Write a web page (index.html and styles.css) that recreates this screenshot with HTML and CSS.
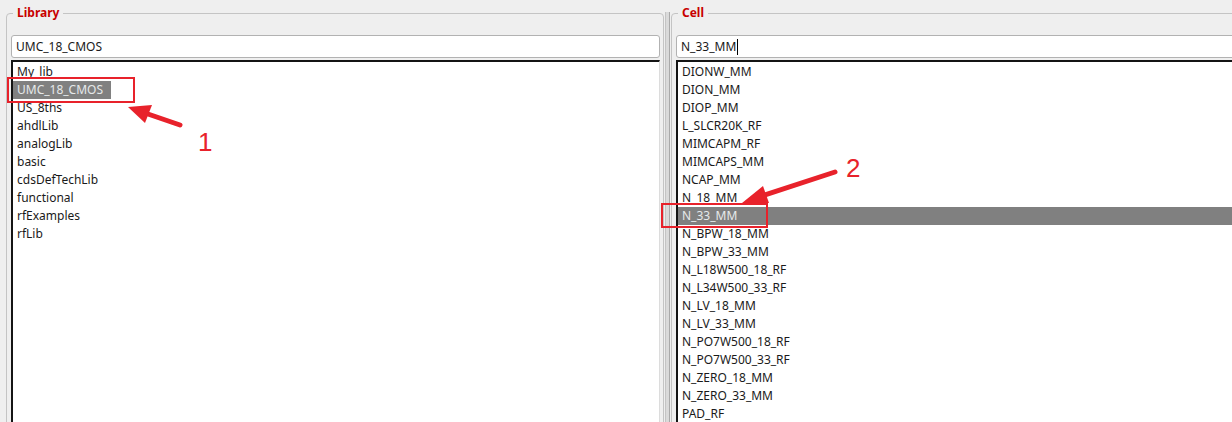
FILE: index.html
```html
<!DOCTYPE html>
<html>
<head>
<meta charset="utf-8">
<link rel="stylesheet" href="styles.css">
</head>
<body>
<div class="window">
  <fieldset class="group group-lib">
    <legend class="title">Library</legend>
    <div class="field">UMC_18_CMOS</div>
    <div class="list">
      <div class="item"><span class="label">My_lib</span></div>
      <div class="item"><span class="label sel">UMC_18_CMOS</span></div>
      <div class="item"><span class="label">US_8ths</span></div>
      <div class="item"><span class="label">ahdlLib</span></div>
      <div class="item"><span class="label">analogLib</span></div>
      <div class="item"><span class="label">basic</span></div>
      <div class="item"><span class="label">cdsDefTechLib</span></div>
      <div class="item"><span class="label">functional</span></div>
      <div class="item"><span class="label">rfExamples</span></div>
      <div class="item"><span class="label">rfLib</span></div>
    </div>
  </fieldset>
  <div class="splitter"><div class="grip"></div></div>
  <fieldset class="group group-cell">
    <legend class="title">Cell</legend>
    <div class="field">N_33_MM<span class="caret"></span></div>
    <div class="list">
      <div class="item"><span class="label">DIONW_MM</span></div>
      <div class="item"><span class="label">DION_MM</span></div>
      <div class="item"><span class="label">DIOP_MM</span></div>
      <div class="item"><span class="label">L_SLCR20K_RF</span></div>
      <div class="item"><span class="label">MIMCAPM_RF</span></div>
      <div class="item"><span class="label">MIMCAPS_MM</span></div>
      <div class="item"><span class="label">NCAP_MM</span></div>
      <div class="item"><span class="label">N_18_MM</span></div>
      <div class="item row-sel"><span class="label">N_33_MM</span></div>
      <div class="item"><span class="label">N_BPW_18_MM</span></div>
      <div class="item"><span class="label">N_BPW_33_MM</span></div>
      <div class="item"><span class="label">N_L18W500_18_RF</span></div>
      <div class="item"><span class="label">N_L34W500_33_RF</span></div>
      <div class="item"><span class="label">N_LV_18_MM</span></div>
      <div class="item"><span class="label">N_LV_33_MM</span></div>
      <div class="item"><span class="label">N_PO7W500_18_RF</span></div>
      <div class="item"><span class="label">N_PO7W500_33_RF</span></div>
      <div class="item"><span class="label">N_ZERO_18_MM</span></div>
      <div class="item"><span class="label">N_ZERO_33_MM</span></div>
      <div class="item"><span class="label">PAD_RF</span></div>
    </div>
  </fieldset>
</div>
<svg class="annot" width="1232" height="422" viewBox="0 0 1232 422">
  <rect x="8" y="78" width="126" height="24" fill="none" stroke="#e8222b" stroke-width="2"/>
  <line x1="180" y1="125" x2="145" y2="113" stroke="#e8222b" stroke-width="5" stroke-linecap="round"/>
  <polygon points="128,107 152,105 145,123" fill="#e8222b"/>
  <text class="num" x="198" y="151">1</text>
  <rect x="662" y="204" width="105" height="23" fill="none" stroke="#e8222b" stroke-width="2"/>
  <line x1="835" y1="172" x2="762" y2="196" stroke="#e8222b" stroke-width="5" stroke-linecap="round"/>
  <polygon points="742,203 763,186 769,203" fill="#e8222b"/>
  <text class="num" x="846" y="177">2</text>
</svg>
</body>
</html>
```

FILE: styles.css
```css
html, body {
  margin: 0;
  padding: 0;
}
body {
  background: #efefef;
  font-family: "Noto Sans", "DejaVu Sans", sans-serif;
  font-size: 12px;
  color: #1a1a1a;
  height: 422px;
  overflow: hidden;
  position: relative;
}
.window {
  display: flex;
  align-items: flex-start;
  width: 1500px;
  height: 422px;
  overflow: hidden;
  padding-left: 6px;
}
.group {
  margin: 5px 0 0 0;
  padding: 14px 3px 0 4px;
  border: 1px solid #c4c4c4;
  border-radius: 4px;
  min-width: 0;
  height: 600px;
  box-sizing: border-box;
  flex: none;
}
.group-lib {
  width: 658px;
}
.group-cell {
  width: 760px;
}
.title {
  margin-left: 2px;
  padding: 0 4px 0 4px;
  font-weight: bold;
  color: #c80000;
  line-height: 16px;
}
.field {
  height: 23px;
  box-sizing: border-box;
  border: 1px solid #b2b2b2;
  border-radius: 3px;
  background: #fff;
  padding: 0 4px;
  line-height: 21px;
  display: flex;
  align-items: center;
}
.caret {
  display: inline-block;
  width: 1px;
  height: 16px;
  background: #000;
  margin-left: 1px;
}
.list {
  margin-top: 2px;
  padding-top: 1px;
  background: #fff;
  border-top: 2px solid #141414;
  border-left: 2px solid #141414;
  border-right: 1px solid #dcdcdc;
  height: 600px;
}
.item {
  height: 18px;
  line-height: 18px;
  white-space: nowrap;
}
.label {
  display: inline-block;
  padding: 0 8px 0 4px;
}
.sel {
  background: #808080;
  color: #e6e9ea;
}
.row-sel {
  background: #808080;
  color: #e6e9ea;
}
.splitter {
  width: 7px;
  flex: none;
  height: 422px;
  display: flex;
  justify-content: center;
  padding-top: 12px;
  box-sizing: border-box;
}
.grip {
  width: 3px;
  border-left: 1px solid #c4c4c4;
  border-right: 1px solid #a9a9a9;
  background: #dadada;
}
.annot {
  position: absolute;
  left: 0;
  top: 0;
  pointer-events: none;
}
.num {
  font-family: "Liberation Sans", Arial, sans-serif;
  font-size: 26px;
  fill: #e8222b;
}
```
